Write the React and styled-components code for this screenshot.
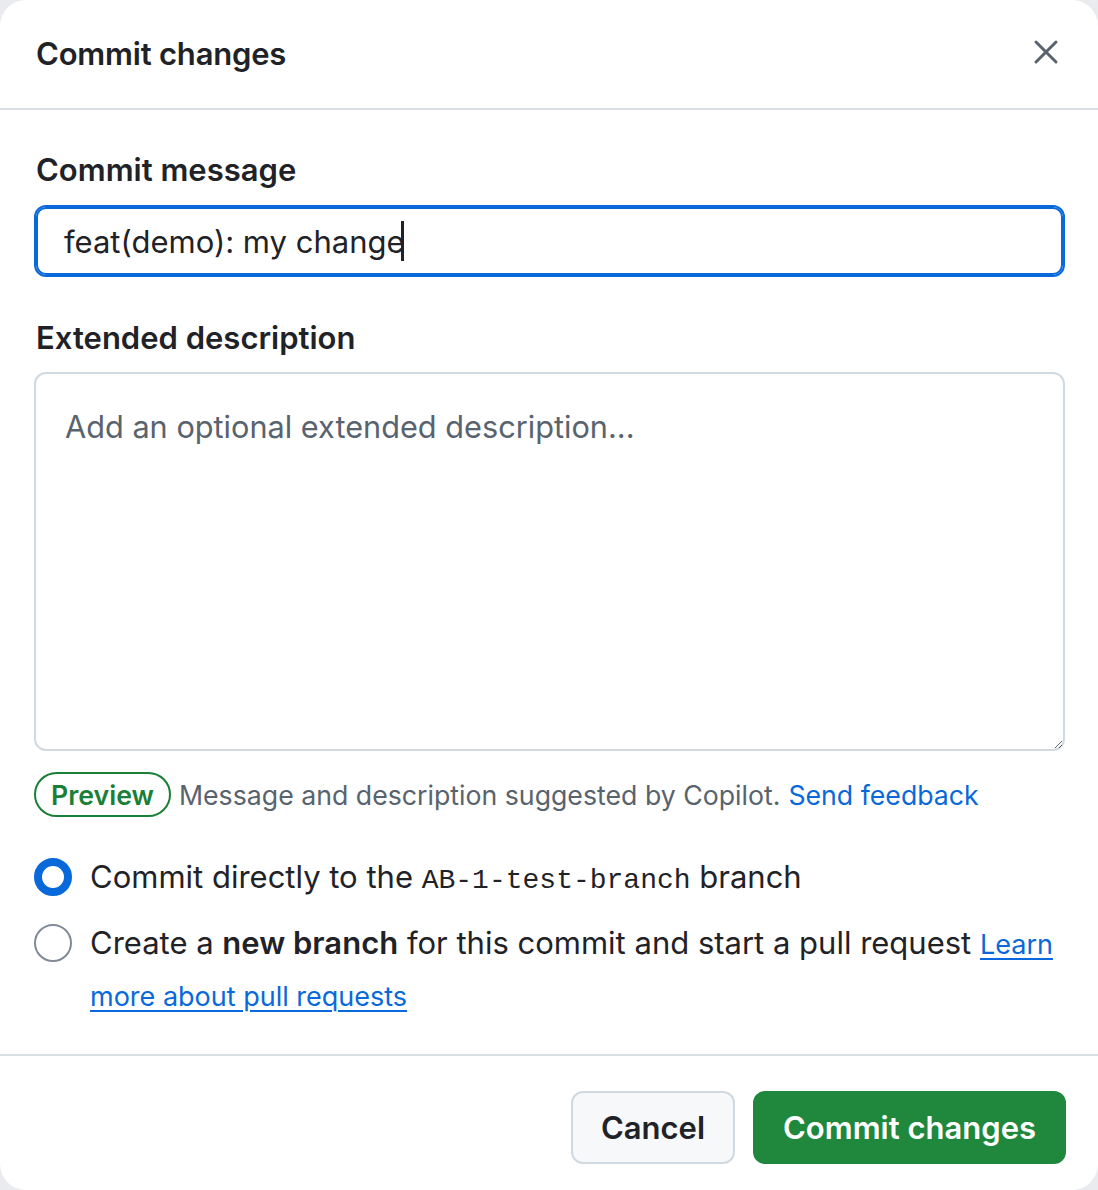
import React from 'react'
import styled, { createGlobalStyle } from 'styled-components'

const GlobalStyle = createGlobalStyle`
  html, body {
    margin: 0;
    padding: 0;
    background: #e9ebee;
  }
  body {
    font-family: Inter, "Noto Sans", "Liberation Sans", sans-serif;
    color: #1f2328;
  }
`

function CloseIcon() {
  return (
    <svg width="26" height="26" viewBox="0 0 26 26" fill="none">
      <path d="M3 3L23 23M23 3L3 23" stroke="#59636e" strokeWidth="3" strokeLinecap="round" />
    </svg>
  )
}

function App() {
  return (
    <>
      <GlobalStyle />
      <Dialog>
        <Header>
          <Title>Commit changes</Title>
          <CloseButton aria-label="Close">
            <CloseIcon />
          </CloseButton>
        </Header>

        <Body>
          <Label>Commit message</Label>
          <FakeInput>
            feat(demo): my change<Caret />
          </FakeInput>

          <Label $top={41}>Extended description</Label>
          <TextArea placeholder="Add an optional extended description..." />

          <Hint>
            <Pill>Preview</Pill>
            <span>Message and description suggested by Copilot.</span>
            <Link href="#">Send feedback</Link>
          </Hint>

          <Options>
            <Option>
              <Radio $checked />
              <OptionText>
                Commit directly to the <Mono>AB-1-test-branch</Mono> branch
              </OptionText>
            </Option>
            <Option>
              <Radio />
              <OptionText>
                Create a <strong>new branch</strong> for this commit and start a pull request{' '}
                <Link href="#" $underline>Learn more about pull requests</Link>
              </OptionText>
            </Option>
          </Options>
        </Body>

        <Footer>
          <Button>Cancel</Button>
          <Button $primary>Commit changes</Button>
        </Footer>
      </Dialog>
    </>
  )
}

export default App

const Dialog = styled.div`
  width: 1098px;
  height: 1190px;
  background: #ffffff;
  border-radius: 26px;
  display: flex;
  flex-direction: column;
  overflow: hidden;
`

const Header = styled.div`
  height: 108px;
  border-bottom: 2px solid #d8dee4;
  padding: 0 36px;
  display: flex;
  align-items: center;
  justify-content: space-between;
`

const Title = styled.h1`
  margin: 0;
  font-size: 31px;
  font-weight: 600;
  line-height: 40px;
  letter-spacing: -0.2px;
`

const CloseButton = styled.button`
  background: none;
  border: 0;
  padding: 0;
  margin-right: 3px;
  margin-top: -4px;
  display: flex;
  cursor: pointer;
`

const Body = styled.div`
  padding: 40px 33px 32px 34px;
  border-bottom: 2px solid #d8dee4;
  display: flex;
  flex-direction: column;
`

const Label = styled.label`
  display: block;
  font-size: 31px;
  font-weight: 600;
  line-height: 40px;
  margin: ${p => (p.$top || 0)}px 0 0 2px;
`

const FakeInput = styled.div`
  margin-top: 15px;
  height: 72px;
  box-sizing: border-box;
  border: 2px solid #0969da;
  box-shadow: inset 0 0 0 2px #0969da;
  border-radius: 12px;
  padding: 0 28px;
  display: flex;
  align-items: center;
  font-size: 31px;
  color: #1f2328;
`

const Caret = styled.span`
  display: inline-block;
  width: 3px;
  height: 40px;
  margin-left: -4px;
  background: #1f2328;
`

const TextArea = styled.textarea`
  margin-top: 14px;
  height: 379px;
  box-sizing: border-box;
  border: 2px solid #d1d9e0;
  border-radius: 12px;
  padding: 31px 29px;
  font-family: inherit;
  font-size: 30.7px;
  line-height: 44px;
  color: #1f2328;
  resize: vertical;
  outline: none;

  &::placeholder {
    color: #59636e;
  }
`

const Hint = styled.div`
  margin-top: 21px;
  display: flex;
  align-items: center;
  gap: 8px;
  font-size: 26.7px;
  color: #59636e;
`

const Pill = styled.span`
  height: 45px;
  box-sizing: border-box;
  padding: 0 15px;
  border: 2px solid #1a7f37;
  border-radius: 999px;
  display: inline-flex;
  align-items: center;
  color: #1a7f37;
  font-weight: 600;
  font-size: 26.7px;
`

const Link = styled.a`
  color: #0969da;
  text-decoration: ${p => (p.$underline ? 'underline' : 'none')};
  text-underline-offset: 4px;
  text-decoration-thickness: 2px;
  font-size: ${p => (p.$underline ? '27px' : 'inherit')};
`

const Options = styled.div`
  margin-top: 35px;
  display: flex;
  flex-direction: column;
  gap: 16px;
`

const Option = styled.div`
  display: flex;
  align-items: flex-start;
  gap: 18px;
`

const Radio = styled.span`
  flex: none;
  width: 38px;
  height: 38px;
  margin-top: 6px;
  box-sizing: border-box;
  border-radius: 50%;
  background: #ffffff;
  border: ${p => (p.$checked ? '8px solid #0969da' : '2px solid #818b98')};
`

const OptionText = styled.div`
  font-size: 31px;
  line-height: 50px;
  color: #1f2328;

  strong {
    font-weight: 600;
  }
`

const Mono = styled.code`
  font-family: "Liberation Mono", "DejaVu Sans Mono", monospace;
  font-size: 28px;
  line-height: 1;
`

const Footer = styled.div`
  padding: 35px 32px 0 0;
  display: flex;
  justify-content: flex-end;
  align-items: flex-start;
  gap: 18px;
`

const Button = styled.button`
  height: 73px;
  box-sizing: border-box;
  padding: 0 28px;
  border-radius: 12px;
  border: 2px solid ${p => (p.$primary ? '#1f883d' : '#d1d9e0')};
  background: ${p => (p.$primary ? '#1f883d' : '#f6f8fa')};
  color: ${p => (p.$primary ? '#ffffff' : '#1f2328')};
  font-family: inherit;
  font-size: 31px;
  font-weight: 600;
  cursor: pointer;
`
